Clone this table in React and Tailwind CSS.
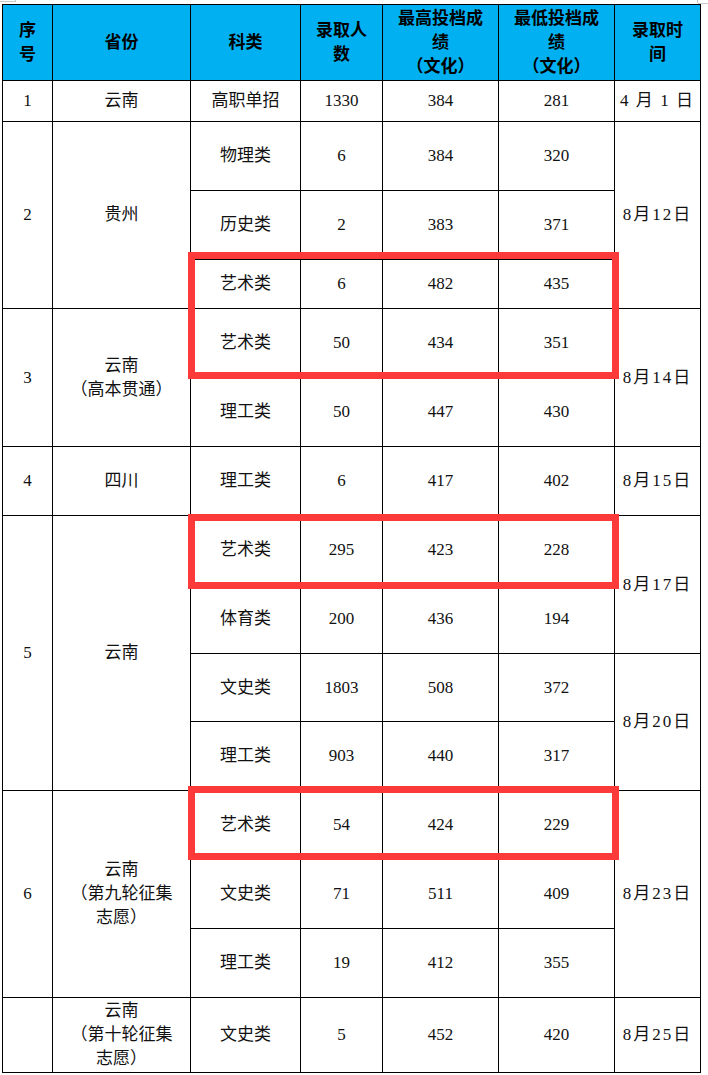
import React from 'react';

function Td({ children, rowSpan, className = '' }) {
  return (
    <td rowSpan={rowSpan} className={`border border-black p-0 text-center align-middle leading-[24px] ${className}`}>
      {children}
    </td>
  );
}

function Th({ children }) {
  return (
    <th className="border border-black bg-[#00b0f0] p-0 text-center align-middle font-bold leading-[24px] text-black">
      {children}
    </th>
  );
}

function Date({ children, rowSpan }) {
  return <Td rowSpan={rowSpan} className="tracking-[2px]">{children}</Td>;
}

function RedBox({ className }) {
  return <div className={`pointer-events-none absolute left-[188px] w-[431px] border-[7px] border-[#fd3a3a] ${className}`} />;
}

export default function App() {
  return (
    <div className="relative h-[1075px] w-[708px] overflow-hidden bg-white font-['Liberation_Serif','Noto_Sans_CJK_SC',serif] text-[17px] text-[#111]">
      {/* page corner marks */}
      <div className="absolute left-0 top-[1px] h-px w-[15px] bg-[#c8c8c8]" />
      <div className="absolute left-[15px] top-0 h-[2px] w-px bg-[#c8c8c8]" />
      <div className="absolute right-[10px] top-0 h-[3px] w-px bg-[#c8c8c8]" />
      <div className="absolute right-0 top-[3px] h-px w-[10px] bg-[#c8c8c8]" />

      <table className="ml-[2px] mt-[4px] w-[699px] table-fixed border-collapse">
        <colgroup>
          <col className="w-[50px]" />
          <col className="w-[138px]" />
          <col className="w-[110px]" />
          <col className="w-[82px]" />
          <col className="w-[116px]" />
          <col className="w-[116px]" />
          <col className="w-[86px]" />
        </colgroup>
        <thead>
          <tr className="h-[76px]">
            <Th>序<br />号</Th>
            <Th>省份</Th>
            <Th>科类</Th>
            <Th>录取人<br />数</Th>
            <Th>最高投档成<br />绩<br />（文化）</Th>
            <Th>最低投档成<br />绩<br />（文化）</Th>
            <Th>录取时<br />间</Th>
          </tr>
        </thead>
        <tbody>
          <tr className="h-[41px]">
            <Td>1</Td>
            <Td>云南</Td>
            <Td>高职单招</Td>
            <Td>1330</Td>
            <Td>384</Td>
            <Td>281</Td>
            <Date>4&thinsp;月&thinsp;1&thinsp;日</Date>
          </tr>

          <tr className="h-[69px]">
            <Td rowSpan={3}>2</Td>
            <Td rowSpan={3}>贵州</Td>
            <Td>物理类</Td>
            <Td>6</Td>
            <Td>384</Td>
            <Td>320</Td>
            <Date rowSpan={3}>8月12日</Date>
          </tr>
          <tr className="h-[69px]">
            <Td>历史类</Td>
            <Td>2</Td>
            <Td>383</Td>
            <Td>371</Td>
          </tr>
          <tr className="h-[49px]">
            <Td>艺术类</Td>
            <Td>6</Td>
            <Td>482</Td>
            <Td>435</Td>
          </tr>

          <tr className="h-[68px]">
            <Td rowSpan={2}>3</Td>
            <Td rowSpan={2}>云南<br />（高本贯通）</Td>
            <Td>艺术类</Td>
            <Td>50</Td>
            <Td>434</Td>
            <Td>351</Td>
            <Date rowSpan={2}>8月14日</Date>
          </tr>
          <tr className="h-[70px]">
            <Td>理工类</Td>
            <Td>50</Td>
            <Td>447</Td>
            <Td>430</Td>
          </tr>

          <tr className="h-[69px]">
            <Td>4</Td>
            <Td>四川</Td>
            <Td>理工类</Td>
            <Td>6</Td>
            <Td>417</Td>
            <Td>402</Td>
            <Date>8月15日</Date>
          </tr>

          <tr className="h-[69px]">
            <Td rowSpan={4}>5</Td>
            <Td rowSpan={4}>云南</Td>
            <Td>艺术类</Td>
            <Td>295</Td>
            <Td>423</Td>
            <Td>228</Td>
            <Date rowSpan={2}>8月17日</Date>
          </tr>
          <tr className="h-[69px]">
            <Td>体育类</Td>
            <Td>200</Td>
            <Td>436</Td>
            <Td>194</Td>
          </tr>
          <tr className="h-[68px]">
            <Td>文史类</Td>
            <Td>1803</Td>
            <Td>508</Td>
            <Td>372</Td>
            <Date rowSpan={2}>8月20日</Date>
          </tr>
          <tr className="h-[69px]">
            <Td>理工类</Td>
            <Td>903</Td>
            <Td>440</Td>
            <Td>317</Td>
          </tr>

          <tr className="h-[69px]">
            <Td rowSpan={3}>6</Td>
            <Td rowSpan={3}>云南<br />（第九轮征集<br />志愿）</Td>
            <Td>艺术类</Td>
            <Td>54</Td>
            <Td>424</Td>
            <Td>229</Td>
            <Date rowSpan={3}>8月23日</Date>
          </tr>
          <tr className="h-[69px]">
            <Td>文史类</Td>
            <Td>71</Td>
            <Td>511</Td>
            <Td>409</Td>
          </tr>
          <tr className="h-[69px]">
            <Td>理工类</Td>
            <Td>19</Td>
            <Td>412</Td>
            <Td>355</Td>
          </tr>

          <tr className="h-[75px]">
            <Td></Td>
            <Td>云南<br />（第十轮征集<br />志愿）</Td>
            <Td>文史类</Td>
            <Td>5</Td>
            <Td>452</Td>
            <Td>420</Td>
            <Date>8月25日</Date>
          </tr>
        </tbody>
      </table>

      <RedBox className="top-[252px] h-[127px]" />
      <RedBox className="top-[514px] h-[75px]" />
      <RedBox className="top-[786px] h-[74px]" />
    </div>
  );
}
